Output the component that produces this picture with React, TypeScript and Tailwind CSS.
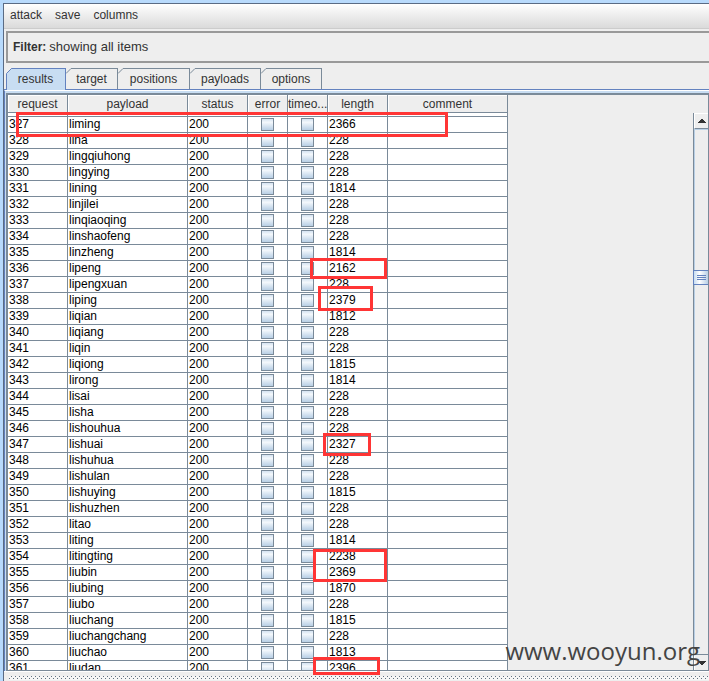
import { useState } from 'react'

type Row = { id: number; payload: string; length: number }

const FIRST_REQUEST = 327

const results: [string, number][] = [
  ['liming', 2366],
  ['lina', 228],
  ['lingqiuhong', 228],
  ['lingying', 228],
  ['lining', 1814],
  ['linjilei', 228],
  ['linqiaoqing', 228],
  ['linshaofeng', 228],
  ['linzheng', 1814],
  ['lipeng', 2162],
  ['lipengxuan', 228],
  ['liping', 2379],
  ['liqian', 1812],
  ['liqiang', 228],
  ['liqin', 228],
  ['liqiong', 1815],
  ['lirong', 1814],
  ['lisai', 228],
  ['lisha', 228],
  ['lishouhua', 228],
  ['lishuai', 2327],
  ['lishuhua', 228],
  ['lishulan', 228],
  ['lishuying', 1815],
  ['lishuzhen', 228],
  ['litao', 228],
  ['liting', 1814],
  ['litingting', 2238],
  ['liubin', 2369],
  ['liubing', 1870],
  ['liubo', 228],
  ['liuchang', 1815],
  ['liuchangchang', 228],
  ['liuchao', 1813],
  ['liudan', 2396],
]

const rows: Row[] = results.map(([payload, length], i) => ({ id: FIRST_REQUEST + i, payload, length }))

const columns = [
  { name: 'request', width: 'w-[60px]' },
  { name: 'payload', width: 'w-[120px]' },
  { name: 'status', width: 'w-[60px]' },
  { name: 'error', width: 'w-[40px]' },
  { name: 'timeo...', width: 'w-[40px]' },
  { name: 'length', width: 'w-[60px]' },
  { name: 'comment', width: 'w-[120px]' },
]

const tabs = [
  { name: 'results', width: 'w-[60px]' },
  { name: 'target', width: 'w-[52px]' },
  { name: 'positions', width: 'w-[72px]' },
  { name: 'payloads', width: 'w-[71px]' },
  { name: 'options', width: 'w-[61px]' },
]

// red boxes drawn over the responses that stand out
const marks = [
  'left-[16px] top-[112px] w-[432px] h-[25px]',
  'left-[310px] top-[258px] w-[77px] h-[21px]',
  'left-[318px] top-[286px] w-[55px] h-[25px]',
  'left-[323px] top-[433px] w-[48px] h-[23px]',
  'left-[313px] top-[549px] w-[74px] h-[33px]',
  'left-[313px] top-[657px] w-[67px] h-[18px]',
]

export default function App() {
  const [tab, setTab] = useState('results')

  return (
    <div className="relative flex h-screen flex-col overflow-hidden bg-[#b8dafc] pl-[3px] pt-[3px] font-['Liberation_Sans',Arial,sans-serif] text-[12px] leading-4 text-[#333]">
      <div className="flex min-h-0 flex-1 flex-col border-l border-t border-[#5a6b84] bg-[#eee]">
        <MenuBar />

        <div className="ml-[2px] mt-[2px] flex h-8 shrink-0 items-center gap-[3px] border-2 border-r-0 border-[#999] pl-[5px]">
          <b>Filter:</b>
          <span className="text-[13px]">showing all items</span>
        </div>

        <div className="mt-[5px] flex shrink-0 pl-[2px]" role="tablist">
          {tabs.map(({ name, width }) => (
            <Tab key={name} name={name} width={width} active={name === tab} onSelect={() => setTab(name)} />
          ))}
        </div>

        <div className="-mt-px flex min-h-0 flex-1 flex-col border-t border-[#6382bf]">
          <div className="flex min-h-0 flex-1 flex-col border-l border-t border-l-[#6382bf] border-t-white bg-[#c8ddf2] pl-px pt-[2px]">
            <div className="flex min-h-0 flex-1 border-b border-l-2 border-r border-t-2 border-[#7a8a99] bg-[#eee]">
              <div className="min-w-0 flex-1 overflow-hidden">
                <ResultsTable />
              </div>
              <ScrollBar />
            </div>
          </div>
        </div>

        <Splitter />
      </div>

      {marks.map((mark) => (
        <div key={mark} className={`pointer-events-none absolute border-[3px] border-[#ff3535] ${mark}`} />
      ))}
      <div className="pointer-events-none absolute bottom-[12px] right-[9px] font-['Open_Sans','Noto_Sans',sans-serif] text-[24px] leading-9 text-[#444]">
        www.wooyun.org
      </div>
    </div>
  )
}

function MenuBar() {
  return (
    <nav className="flex h-[25px] shrink-0 items-center gap-[13px] border-b border-[#ccc] bg-linear-to-b from-white to-[#dadada] pb-[2px] pl-[6px]">
      <button type="button">attack</button>
      <button type="button">save</button>
      <button type="button">columns</button>
    </nav>
  )
}

function Tab({
  name,
  width,
  active,
  onSelect,
}: {
  name: string
  width: string
  active: boolean
  onSelect: () => void
}) {
  return (
    <button
      type="button"
      role="tab"
      aria-selected={active}
      onClick={onSelect}
      className={[
        'relative border-r border-t text-center',
        width,
        active ? 'h-[22px] border-[#6382bf] bg-[#c8ddf2] pb-[2px]' : 'h-[21px] border-[#7a8a99] pb-px',
      ].join(' ')}
    >
      {/* cut corner */}
      <svg className="absolute -top-px left-0 h-[22px] w-[7px]" viewBox="0 0 7 22" fill="none">
        <path d="M0 0H6L0 6Z" fill="#eee" />
        <path d={active ? 'M.5 22V5.5L5.5.5H7' : 'M0 5.5L5 .5H7'} stroke={active ? '#6382bf' : '#7a8a99'} />
      </svg>
      {name}
    </button>
  )
}

function ResultsTable() {
  return (
    <table className="w-[500px] table-fixed border-separate border-spacing-0 text-black">
      <thead>
        <tr className="h-[18px] text-[#333]">
          {columns.map(({ name, width }) => (
            <th
              key={name}
              className={`${width} h-[18px] overflow-hidden border-b border-r border-[#7a8a99] bg-[#eee] p-0 text-center font-normal whitespace-nowrap shadow-[inset_1px_1px_#fff]`}
            >
              {name}
            </th>
          ))}
        </tr>
      </thead>
      <tbody className="bg-white">
        <tr>
          {columns.map(({ name }) => (
            <td key={name} className="h-[4px] border-b border-r border-[#7a8a99] p-0" />
          ))}
        </tr>
        {rows.map((row) => (
          <tr key={row.id}>
            <Cell>{row.id}</Cell>
            <Cell>{row.payload}</Cell>
            <Cell>200</Cell>
            <CheckCell label={`error ${row.id}`} />
            <CheckCell label={`timeout ${row.id}`} />
            <Cell>{row.length}</Cell>
            <Cell />
          </tr>
        ))}
      </tbody>
    </table>
  )
}

function Cell({ children }: { children?: React.ReactNode }) {
  return <td className="h-4 border-b border-r border-[#7a8a99] p-0 pl-px leading-[15px]">{children}</td>
}

function CheckCell({ label }: { label: string }) {
  return (
    <td className="h-4 border-b border-r border-[#7a8a99] p-0">
      <input
        type="checkbox"
        aria-label={label}
        className="mx-auto block size-[13px] appearance-none border border-[#7a8a99] bg-linear-to-b from-[#d5e3f1] via-[#f4f8fc] via-30% to-[#b8cfe5] checked:bg-[#6382bf]"
      />
    </td>
  )
}

function ScrollBar() {
  return (
    <div className="mt-[18px] flex w-[15px] shrink-0 flex-col border-l border-[#7a8a99]">
      <button
        type="button"
        aria-label="Scroll up"
        className="flex h-4 items-center justify-center border-b border-l border-t border-b-[#7a8a99] border-l-white border-t-white"
      >
        <svg className="h-[4px] w-[8px]" viewBox="0 0 8 4" shapeRendering="crispEdges">
          <path d="M3 0h2v1h1v1h1v1h1v1H0V3h1V2h1V1h1z" fill="#333" />
        </svg>
      </button>
      <div className="flex-1 border-l border-t border-[#b8cfe5] pt-[140px]">
        <div className="relative -ml-[2px] flex h-[15px] flex-col items-center justify-center gap-px border border-r-0 border-[#6382bf] bg-linear-to-r from-[#c8ddf2] via-white via-40% to-[#b8cfe5]">
          <div className="h-px w-[9px] bg-[#6382bf]" />
          <div className="h-px w-[9px] bg-[#6382bf]" />
          <div className="h-px w-[9px] bg-[#6382bf]" />
        </div>
      </div>
      <button
        type="button"
        aria-label="Scroll down"
        className="flex h-4 items-center justify-center border-l border-t border-l-white border-t-[#7a8a99]"
      >
        <svg className="h-[4px] w-[8px]" viewBox="0 0 8 4" shapeRendering="crispEdges">
          <path d="M0 0h8v1H7v1H6v1H5v1H3V3H2V2H1V1H0z" fill="#333" />
        </svg>
      </button>
    </div>
  )
}

function Splitter() {
  return (
    <div className="h-[10px] shrink-0 border-t border-white pl-[5px] pt-[4px]">
      <svg className="block h-[4px] w-full" shapeRendering="crispEdges">
        <defs>
          <pattern id="bumps" width="4" height="4" patternUnits="userSpaceOnUse">
            <path d="M0 0h4v4H0z" fill="#f6f6f6" />
            <path d="M2 0h1v1H2zM0 2h1v1H0z" fill="#5f7080" />
          </pattern>
        </defs>
        <rect width="100%" height="100%" fill="url(#bumps)" />
      </svg>
    </div>
  )
}
